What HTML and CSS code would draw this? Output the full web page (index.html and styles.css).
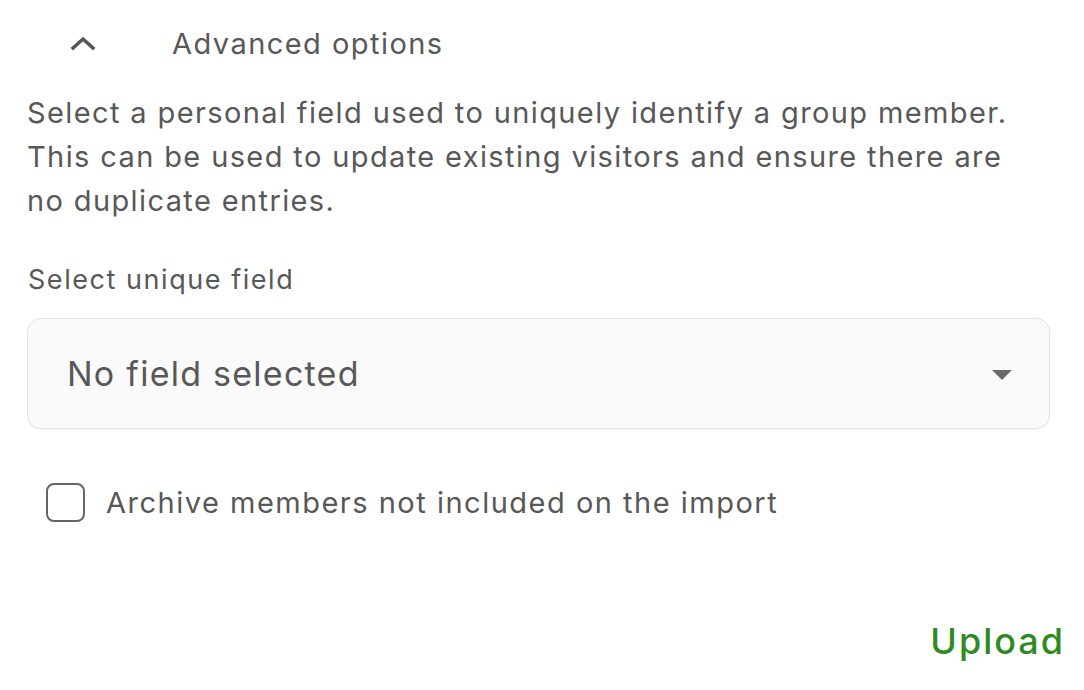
FILE: index.html
```html
<!DOCTYPE html>
<html>
<head>
<meta charset="utf-8">
<link rel="stylesheet" href="styles.css">
</head>
<body>
<div class="panel">
  <div class="header">
    <span class="chev">
      <svg width="28" height="18" viewBox="0 0 28 18"><path d="M4 14 L14 5 L24 14" fill="none" stroke="#555" stroke-width="3.4" stroke-linecap="square" stroke-linejoin="miter"/></svg>
    </span>
    <span class="title">Advanced options</span>
  </div>
  <p class="desc">Select a personal field used to uniquely identify a group member. This can be used to update existing visitors and ensure there are no duplicate entries.</p>
  <div class="label">Select unique field</div>
  <div class="select">
    <span class="value">No field selected</span>
    <svg class="caret" width="22" height="12" viewBox="0 0 22 12"><path d="M1 1 H21 L11 11 Z" fill="#6a6a6a"/></svg>
  </div>
  <label class="check">
    <span class="box"></span>
    <span class="check-text">Archive members not included on the import</span>
  </label>
  <div class="actions">
    <span class="upload">Upload</span>
  </div>
</div>
</body>
</html>
```

FILE: styles.css
```css
html, body {
  margin: 0;
  padding: 0;
  background: #ffffff;
}
body {
  font-family: Inter, "Noto Sans", sans-serif;
  color: #585858;
}
.panel {
  padding: 0 20px 0 27px;
  width: 1037px;
}
.header {
  display: flex;
  align-items: center;
  height: 86px;
  padding-left: 42px;
}
.chev {
  display: flex;
  width: 103px;
}
.title {
  font-size: 29px;
  letter-spacing: 1.45px;
}
.desc {
  margin: 5px 0 0 0;
  font-size: 29px;
  line-height: 44px;
  width: 1000px;
  letter-spacing: 1.38px;
}
.label {
  margin-top: 39px;
  font-size: 27px;
  line-height: 36px;
  padding-left: 1px;
  letter-spacing: 1.55px;
}
.select {
  margin-top: 20px;
  height: 111px;
  width: 1023px;
  box-sizing: border-box;
  border: 1.5px solid #e3e3e3;
  border-radius: 14px;
  background: #fafafa;
  display: flex;
  align-items: center;
  justify-content: space-between;
  padding: 0 36px 0 39px;
  box-shadow: 0 1px 1px rgba(0,0,0,0.04);
}
.value {
  font-size: 34px;
  letter-spacing: 1.25px;
}
.caret {
  margin-top: 2px;
}
.check {
  display: flex;
  align-items: center;
  margin-top: 54px;
  padding-left: 19px;
  gap: 21px;
}
.box {
  width: 35px;
  height: 35px;
  border: 2.5px solid #666;
  border-radius: 8px;
}
.check-text {
  font-size: 29px;
  letter-spacing: 1.5px;
}
.actions {
  display: flex;
  justify-content: flex-end;
  margin-top: 97px;
  margin-right: -1px;
}
.upload {
  color: #2e8a22;
  font-size: 36px;
  font-weight: 500;
  letter-spacing: 2px;
}
```
